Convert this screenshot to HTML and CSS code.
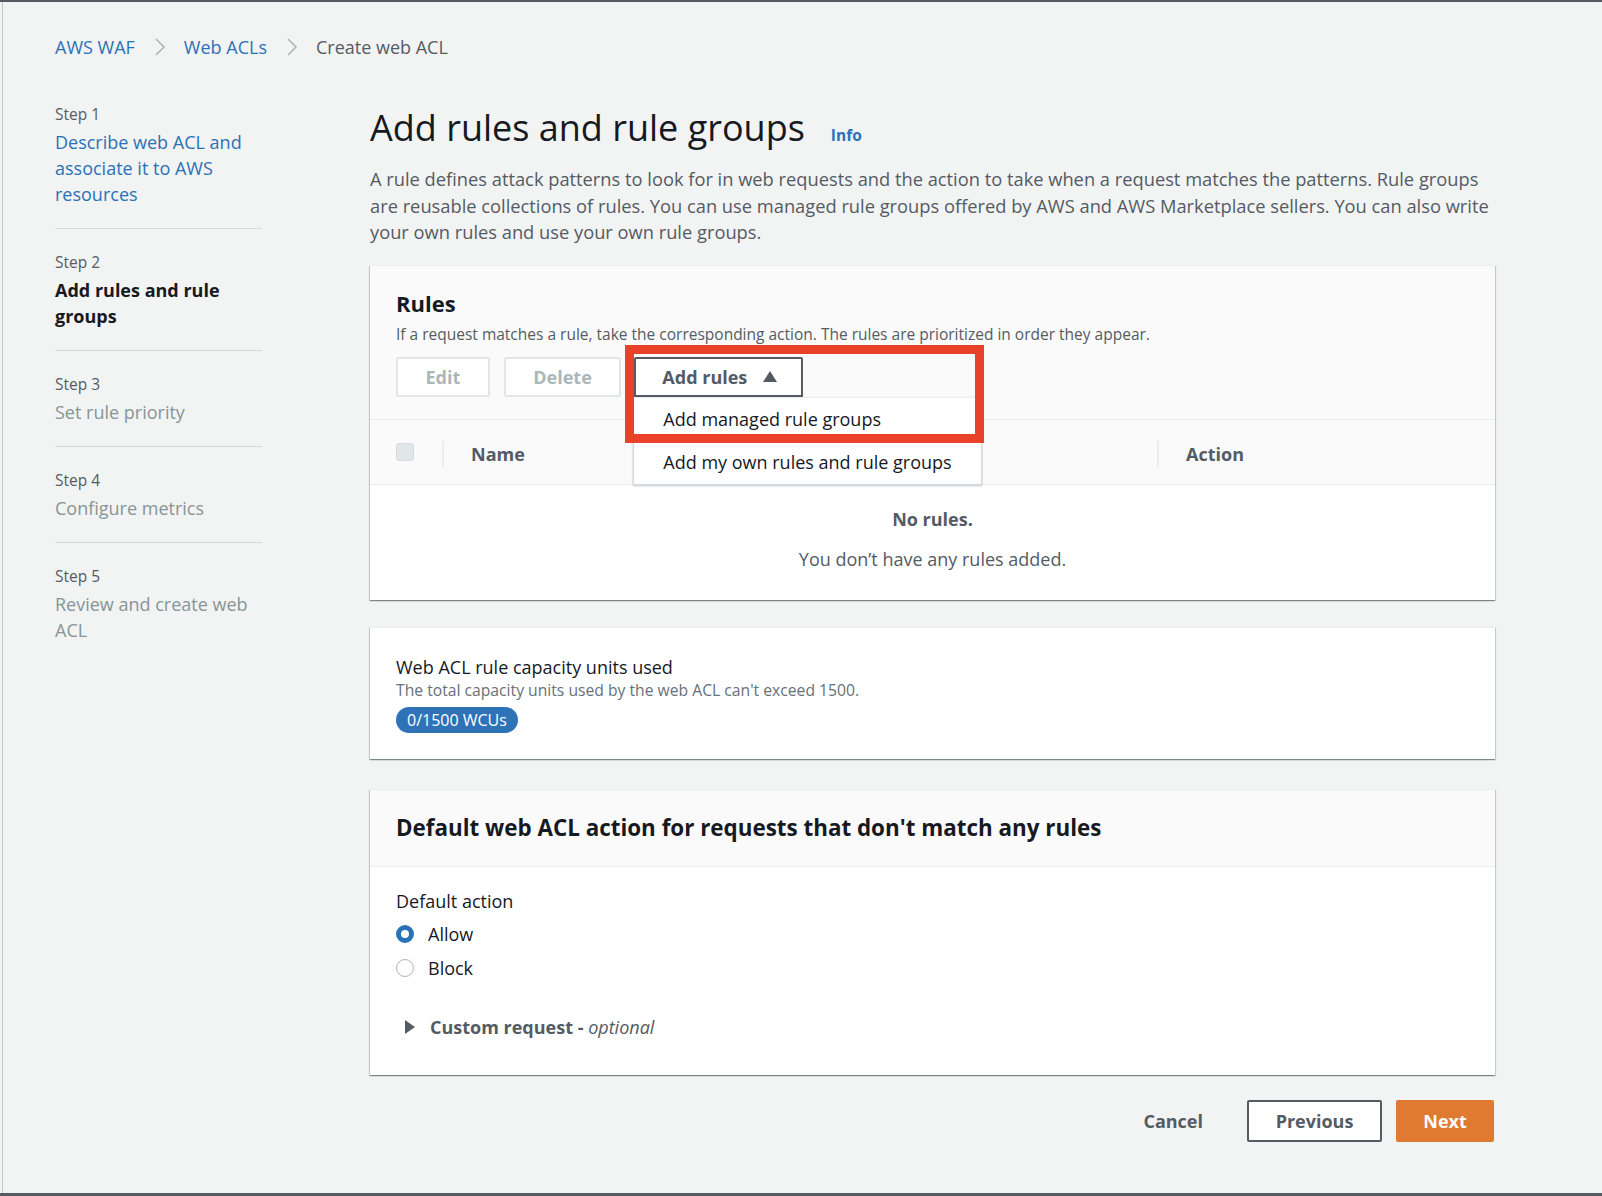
FILE: index.html
```html
<!DOCTYPE html>
<html lang="en">
<head>
<meta charset="utf-8">
<title>Create web ACL - AWS WAF</title>
<link rel="stylesheet" href="styles.css">
</head>
<body>
<div class="frame">
  <nav class="crumbs">
    <a class="crumb-link" href="#">AWS WAF</a>
    <svg class="chev" width="12" height="20" viewBox="0 0 12 20"><polyline points="2,2 10,10 2,18" fill="none" stroke="#aab7b8" stroke-width="1.6"/></svg>
    <a class="crumb-link" href="#">Web ACLs</a>
    <svg class="chev" width="12" height="20" viewBox="0 0 12 20"><polyline points="2,2 10,10 2,18" fill="none" stroke="#aab7b8" stroke-width="1.6"/></svg>
    <span class="crumb-current">Create web ACL</span>
  </nav>

  <div class="layout">
    <aside class="steps">
      <div class="step">
        <div class="step-label">Step 1</div>
        <a class="step-title link" href="#">Describe web ACL and associate it to AWS resources</a>
      </div>
      <div class="step">
        <div class="step-label">Step 2</div>
        <div class="step-title current">Add rules and rule groups</div>
      </div>
      <div class="step">
        <div class="step-label">Step 3</div>
        <div class="step-title disabled">Set rule priority</div>
      </div>
      <div class="step">
        <div class="step-label">Step 4</div>
        <div class="step-title disabled">Configure metrics</div>
      </div>
      <div class="step last">
        <div class="step-label">Step 5</div>
        <div class="step-title disabled">Review and create web ACL</div>
      </div>
    </aside>

    <main class="content">
      <header class="page-head">
        <h1>Add rules and rule groups</h1>
        <a class="info" href="#">Info</a>
      </header>
      <p class="page-desc">A rule defines attack patterns to look for in web requests and the action to take when a request matches the patterns. Rule groups are reusable collections of rules. You can use managed rule groups offered by AWS and AWS Marketplace sellers. You can also write your own rules and use your own rule groups.</p>

      <section class="panel rules-panel">
        <div class="rules-head">
          <h2>Rules</h2>
          <p class="rules-desc">If a request matches a rule, take the corresponding action. The rules are prioritized in order they appear.</p>
          <div class="actions">
            <button class="btn btn-disabled">Edit</button>
            <button class="btn btn-disabled">Delete</button>
            <div class="dropdown">
              <button class="btn btn-open">Add rules
                <svg class="caret" width="14" height="11" viewBox="0 0 14 11"><polygon points="7,0 14,11 0,11" fill="#545b64"/></svg>
              </button>
              <ul class="menu">
                <li class="menu-item">Add managed rule groups</li>
                <li class="menu-item">Add my own rules and rule groups</li>
              </ul>
              <div class="highlight"></div>
            </div>
          </div>
        </div>
        <div class="table-head">
          <div class="th th-check"><span class="checkbox"></span></div>
          <div class="th th-name">Name</div>
          <div class="th th-action">Action</div>
        </div>
        <div class="table-empty">
          <div class="empty-title">No rules.</div>
          <div class="empty-text">You don’t have any rules added.</div>
        </div>
      </section>

      <section class="panel wcu-panel">
        <div class="wcu-title">Web ACL rule capacity units used</div>
        <div class="wcu-desc">The total capacity units used by the web ACL can't exceed 1500.</div>
        <span class="badge">0/1500 WCUs</span>
      </section>

      <section class="panel default-panel">
        <div class="panel-header">
          <h2>Default web ACL action for requests that don't match any rules</h2>
        </div>
        <div class="panel-body">
          <div class="field-label">Default action</div>
          <label class="radio-row"><span class="radio checked"></span>Allow</label>
          <label class="radio-row"><span class="radio"></span>Block</label>
          <div class="expander">
            <svg class="expander-caret" width="10" height="14" viewBox="0 0 10 14"><polygon points="0,0 10,7 0,14" fill="#545b64"/></svg>
            <span class="expander-text">Custom request - <em>optional</em></span>
          </div>
        </div>
      </section>

      <div class="footer-actions">
        <button class="btn-link">Cancel</button>
        <button class="btn btn-normal">Previous</button>
        <button class="btn btn-primary">Next</button>
      </div>
    </main>
  </div>
</div>
</body>
</html>
```

FILE: styles.css
```css
* { box-sizing: border-box; }

html, body {
  margin: 0;
  padding: 0;
}

body {
  background: #f2f3f3;
  font-family: "Open Sans", "Liberation Sans", sans-serif;
  font-size: 18px;
  color: #16191f;
  min-height: 100vh;
  border-top: 2px solid #545b64;
  border-bottom: 3px solid #545b64;
}

.frame {
  margin-left: 2px;
  border-left: 1px solid #c6c9cc;
  min-height: calc(100vh - 5px);
  padding: 33px 0 0 52px;
}

/* breadcrumbs */
.crumbs {
  display: flex;
  align-items: center;
  height: 24px;
  line-height: 24px;
}
.crumb-link {
  color: #2a72b7;
  text-decoration: none;
}
.chev {
  margin: 0 18px 0 19px;
}
.crumb-current {
  color: #545b64;
}

.layout {
  display: flex;
  margin-top: 45px;
}

/* steps sidebar */
.steps {
  width: 207px;
  flex: none;
}
.step {
  padding: 23px 0 21px;
  border-bottom: 1px solid #d5dbdb;
}
.step:first-child { padding-top: 0; }
.step.last { border-bottom: none; }
.step-label {
  font-size: 15.5px;
  line-height: 20px;
  color: #545b64;
}
.step-title {
  display: block;
  margin-top: 5px;
  line-height: 26px;
}
.step-title.link { color: #2a72b7; text-decoration: none; }
.step-title.current { font-weight: 700; color: #16191f; }
.step-title.disabled { color: #879596; }

/* content */
.content {
  margin-left: 108px;
  width: 1125px;
  flex: none;
}
.page-head {
  display: flex;
  align-items: baseline;
  margin-top: 2px;
}
.page-head h1 {
  margin: 0;
  font-size: 36px;
  line-height: 44px;
  font-weight: 400;
  color: #16191f;
}
.info {
  margin-left: 26px;
  font-size: 15.5px;
  font-weight: 700;
  color: #2a72b7;
  text-decoration: none;
}
.page-desc {
  margin: 16px 0 0;
  font-size: 18.3px;
  line-height: 26.5px;
  color: #545b64;
}

.panel {
  background: #fff;
  border-top: 1px solid #eaeded;
  box-shadow: 0 1px 1px 0 rgba(0, 28, 36, 0.3), 1px 1px 1px 0 rgba(0, 28, 36, 0.15), -1px 1px 1px 0 rgba(0, 28, 36, 0.15);
}

/* rules panel */
.rules-panel {
  margin-top: 19px;
}
.rules-head {
  background: #fafafa;
  padding: 23px 26px 22px;
  border-bottom: 1px solid #eaeded;
}
.rules-head h2 {
  margin: 0;
  font-size: 22px;
  line-height: 28px;
  font-weight: 700;
}
.rules-desc {
  margin: 7px 0 0;
  font-size: 15.5px;
  line-height: 20px;
  color: #545b64;
}
.actions {
  display: flex;
  gap: 14px;
  margin-top: 13px;
}

.btn {
  font-family: inherit;
  font-size: 18px;
  font-weight: 700;
  height: 40px;
  padding: 0 27.5px;
  border-radius: 2px;
  background: #fff;
  display: inline-flex;
  align-items: center;
  cursor: pointer;
}
.btn-disabled {
  border: 2px solid #e1e6e6;
  color: #aab7b8;
}
.btn-open {
  border: 2px solid #545b64;
  color: #545b64;
  border-radius: 2px 2px 0 0;
  padding: 0 24px 0 26px;
}
.caret { margin-left: 16px; }

.dropdown {
  position: relative;
  margin-left: -1px;
}
.menu {
  position: absolute;
  left: -1px;
  top: 40px;
  width: 349px;
  margin: 0;
  padding: 0;
  list-style: none;
  background: #fff;
  border: 1px solid #d5dbdb;
  border-top: 1px solid #eaeded;
  box-shadow: 0 1px 2px rgba(0, 28, 36, 0.25);
  z-index: 2;
}
.menu-item {
  height: 43px;
  line-height: 43px;
  padding-left: 29px;
  color: #16191f;
}
.highlight {
  position: absolute;
  left: -9px;
  top: -12px;
  width: 359px;
  height: 98px;
  border: 9px solid #e9412a;
  z-index: 3;
  pointer-events: none;
}

.table-head {
  display: grid;
  grid-template-columns: 72px 715px 1fr;
  background: #fafafa;
  height: 65px;
  border-bottom: 1px solid #eaeded;
  align-items: center;
  padding-top: 4px;
}
.th {
  font-weight: 700;
  color: #545b64;
  line-height: 26px;
}
.th-check {
  padding-left: 26px;
  height: 100%;
  display: flex;
  align-items: center;
}
.checkbox {
  width: 18px;
  height: 18px;
  border-radius: 3px;
  background: #e1e6e6;
  border: 1px solid #d5dbdb;
  margin-top: -4px;
}
.th-name, .th-action {
  border-left: 2px solid #eaeded;
  padding-left: 27px;
}
.table-empty {
  text-align: center;
  padding: 21px 0 28px;
}
.empty-title {
  font-weight: 700;
  color: #545b64;
  line-height: 26px;
}
.empty-text {
  margin-top: 14px;
  color: #545b64;
  line-height: 26px;
}

/* wcu panel */
.wcu-panel {
  margin-top: 27px;
  padding: 26px 26px 26px;
}
.wcu-title {
  line-height: 26px;
}
.wcu-desc {
  font-size: 15.7px;
  line-height: 20px;
  color: #687078;
}
.badge {
  display: inline-block;
  margin-top: 7px;
  background: #2e73b8;
  color: #fff;
  font-size: 16px;
  line-height: 26px;
  height: 26px;
  padding: 0 11px;
  border-radius: 13px;
}

/* default action panel */
.default-panel {
  margin-top: 30px;
}
.panel-header {
  background: #fafafa;
  padding: 24px 26px 24px;
  border-bottom: 1px solid #eaeded;
}
.panel-header h2 {
  margin: 0;
  font-size: 22.4px;
  line-height: 28px;
  font-weight: 700;
  color: #16191f;
}
.panel-body {
  padding: 21px 26px 35px;
}
.field-label {
  line-height: 26px;
}
.radio-row {
  display: flex;
  align-items: center;
  height: 34px;
  line-height: 26px;
}
.radio-row:first-of-type { margin-top: 3px; }
.radio {
  width: 18px;
  height: 18px;
  border-radius: 50%;
  border: 1.5px solid #aab7b8;
  background: #fff;
  margin-right: 14px;
}
.radio.checked {
  border: 5.5px solid #2a72b7;
}
.expander {
  display: flex;
  align-items: center;
  margin-top: 29px;
  line-height: 26px;
}
.expander-caret {
  margin-left: 9px;
  margin-right: 15px;
}
.expander-text {
  font-weight: 700;
  color: #545b64;
}
.expander-text em {
  font-weight: 400;
  font-style: italic;
}

/* footer */
.footer-actions {
  display: flex;
  justify-content: flex-end;
  align-items: center;
  margin-top: 25px;
  margin-right: 1px;
}
.btn-link {
  font-family: inherit;
  font-size: 18px;
  font-weight: 700;
  color: #545b64;
  background: none;
  border: none;
  padding: 0 28px 0 0;
  margin-right: 16px;
  height: 40px;
}
.btn-normal {
  border: 2px solid #545b64;
  color: #545b64;
  width: 135px;
  justify-content: center;
  height: 42px;
}
.btn-primary {
  margin-left: 14px;
  border: 2px solid #e07a32;
  background: #e07a32;
  color: #fff;
  width: 98px;
  justify-content: center;
  height: 42px;
}
```
